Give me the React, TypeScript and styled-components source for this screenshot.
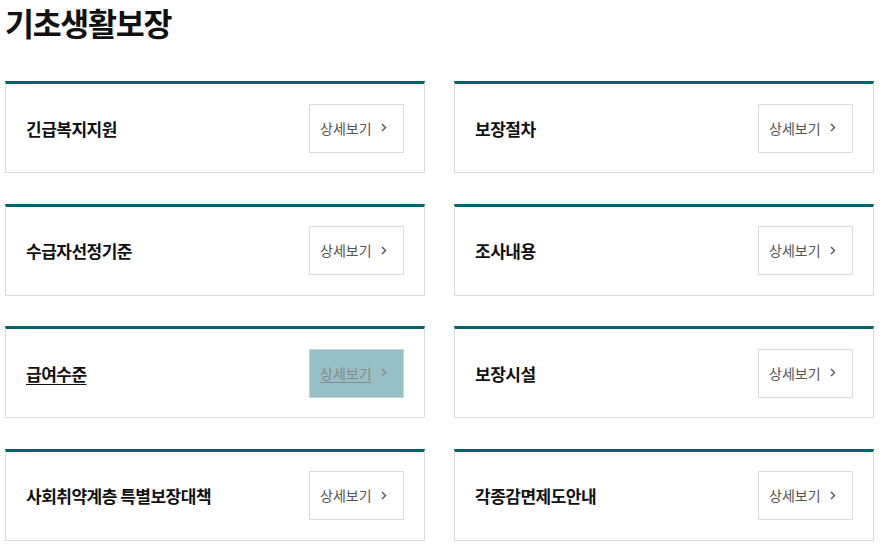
import React from "react";
import styled, { createGlobalStyle } from "styled-components";

const Global = createGlobalStyle`
  html, body { margin: 0; padding: 0; background: #fff; }
  body { font-family: "Noto Sans CJK KR", "Noto Sans", sans-serif; color: #111; }
`;

const Page = styled.div`
  padding: 0 16px 0 5px;
  width: 869px;
  box-sizing: border-box;
`;

const Header = styled.header`
  height: 81px;
`;

const Title = styled.h1`
  margin: 0;
  font-size: 31.5px;
  line-height: 44px;
  font-weight: 700;
  letter-spacing: -1.3px;
  color: #111;
`;

const Grid = styled.div`
  display: grid;
  grid-template-columns: 420px 420px;
  column-gap: 29px;
  row-gap: 30.67px;
`;

const Card = styled.div`
  box-sizing: border-box;
  height: 92px;
  border: 1px solid #dcdcdc;
  border-top: 3px solid #00646e;
  display: flex;
  align-items: center;
  justify-content: space-between;
  padding: 0 20px;
`;

const Name = styled.span<{ $hover?: boolean }>`
  font-size: 17px;
  font-weight: 700;
  letter-spacing: -0.5px;
  color: #111;
  text-decoration: ${(p) => (p.$hover ? "underline" : "none")};
  text-underline-offset: 3px;
`;

const More = styled.a<{ $hover?: boolean }>`
  box-sizing: border-box;
  width: 95px;
  height: 49px;
  padding: 0 0 1px 10px;
  border: 1px solid ${(p) => (p.$hover ? "#c9d6d9" : "#dcdcdc")};
  background: ${(p) => (p.$hover ? "#97bfc6" : "#fff")};
  color: ${(p) => (p.$hover ? "#8a8a8a" : "#555")};
  display: flex;
  align-items: center;
  justify-content: flex-start;
  gap: 9px;
  font-size: 14px;
  letter-spacing: 0;
  text-decoration: none;
  cursor: pointer;
`;

const Label = styled.span<{ $hover?: boolean }>`
  text-decoration: ${(p) => (p.$hover ? "underline" : "none")};
  text-underline-offset: 3px;
`;

const Chevron = () => (
  <svg width="6" height="9" viewBox="0 0 6 9" fill="none">
    <path d="M1 1l3.5 3.5L1 8" stroke="currentColor" strokeWidth="1.4" />
  </svg>
);

const items = [
  "긴급복지지원",
  "보장절차",
  "수급자선정기준",
  "조사내용",
  "급여수준",
  "보장시설",
  "사회취약계층 특별보장대책",
  "각종감면제도안내",
];

export default function App() {
  return (
    <Page>
      <Global />
      <Header>
        <Title>기초생활보장</Title>
      </Header>
      <Grid>
        {items.map((t, i) => {
          const hover = i === 4;
          return (
            <Card key={t}>
              <Name $hover={hover}>{t}</Name>
              <More $hover={hover}>
                <Label $hover={hover}>상세보기</Label>
                <Chevron />
              </More>
            </Card>
          );
        })}
      </Grid>
    </Page>
  );
}
